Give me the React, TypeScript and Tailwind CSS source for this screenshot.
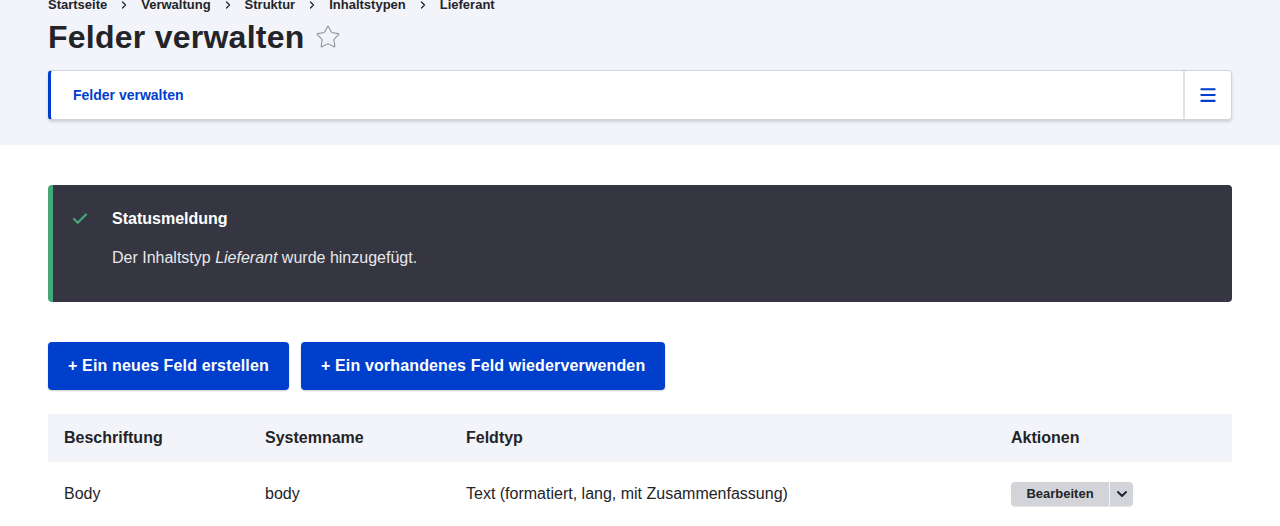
import { Star, Check, ChevronDown, Menu, ChevronRight } from "lucide-react";

const crumbs = ["Startseite", "Verwaltung", "Struktur", "Inhaltstypen", "Lieferant"];

export default function App() {
  return (
    <div className="min-h-screen bg-white text-[#232429]" style={{ fontFamily: '"Liberation Sans", Arial, sans-serif' }}>
      <div className="bg-[#f3f4f9] px-12 pb-[25px]">
        <nav className="-mt-[4px] flex h-[17px] items-center text-[13px] font-bold leading-none">
          {crumbs.map((c, i) => (
            <span key={c} className="flex items-center">
              {i > 0 && <ChevronRight className="mx-[6px] h-3 w-3 stroke-[2.5]" />}
              <span className="px-[5px] first:pl-0">{c}</span>
            </span>
          ))}
        </nav>
        <div className="mt-[7px] flex h-[34px] items-center">
          <h1 className="text-[32px] font-bold leading-none tracking-[0.25px]">Felder verwalten</h1>
          <Star className="ml-[10px] h-[26px] w-[26px] stroke-[1] text-[#8e929c]" />
        </div>
        <div className="mt-[16px] flex h-[50px] rounded-sm border border-[#d3d4d9] border-l-[3px] border-l-[#003ecc] bg-white shadow-[0_2px_3px_rgba(0,0,0,0.15)]">
          <div className="flex flex-1 items-center pl-[22px] text-sm font-bold text-[#003ecc]">Felder verwalten</div>
          <div className="flex w-[48px] items-center justify-center border-l-2 border-[#e1e2e6]">
            <Menu className="h-5 w-5 stroke-[2.5] text-[#003ecc]" />
          </div>
        </div>
      </div>

      <div className="px-12 pt-10">
        <div className="flex h-[117px] rounded-sm border-l-[5px] border-[#42a877] bg-[#353641] pl-[18px] pt-[24px] text-white">
          <Check className="mt-[1px] h-[18px] w-[18px] stroke-[3] text-[#42a877]" />
          <div className="ml-[23px]">
            <div className="text-base font-bold leading-5">Statusmeldung</div>
            <div className="mt-[19px] text-base leading-5 text-[#e8e8ec]">
              Der Inhaltstyp <em>Lieferant</em> wurde hinzugefügt.
            </div>
          </div>
        </div>

        <div className="mt-10 flex gap-3">
          <button className="h-12 rounded-sm bg-[#003ecc] px-5 text-base font-bold tracking-[0.15px] text-white shadow-[0_1px_2px_rgba(0,0,0,0.2)]">
            + Ein neues Feld erstellen
          </button>
          <button className="h-12 rounded-sm bg-[#003ecc] px-5 text-base font-bold tracking-[0.15px] text-white shadow-[0_1px_2px_rgba(0,0,0,0.2)]">
            + Ein vorhandenes Feld wiederverwenden
          </button>
        </div>

        <table className="mt-6 w-full border-collapse text-base">
          <thead>
            <tr className="h-12 bg-[#f3f4f9] text-left">
              <th className="w-[201px] px-4 font-bold">Beschriftung</th>
              <th className="w-[201px] px-4 font-bold">Systemname</th>
              <th className="px-4 font-bold">Feldtyp</th>
              <th className="w-[237px] px-4 font-bold">Aktionen</th>
            </tr>
          </thead>
          <tbody>
            <tr className="h-[64px] border-b border-[#d3d4d9]">
              <td className="px-4">Body</td>
              <td className="px-4">body</td>
              <td className="px-4">Text (formatiert, lang, mit Zusammenfassung)</td>
              <td className="px-4">
                <div className="inline-flex h-6 rounded-sm bg-[#d3d4d9] text-[13px] font-bold shadow-[0_1px_1px_rgba(0,0,0,0.1)]">
                  <span className="flex w-[98px] items-center justify-center">Bearbeiten</span>
                  <span className="flex w-6 items-center justify-center border-l border-[#f3f4f9]">
                    <ChevronDown className="h-4 w-4 stroke-[3] text-[#222330]" />
                  </span>
                </div>
              </td>
            </tr>
          </tbody>
        </table>
      </div>
    </div>
  );
}
